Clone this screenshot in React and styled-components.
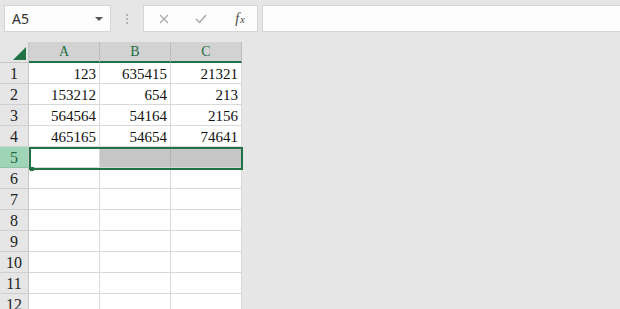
import React from 'react'
import styled, { createGlobalStyle } from 'styled-components'

const GlobalStyle = createGlobalStyle`
  * { box-sizing: border-box; }
  html, body {
    margin: 0;
    padding: 0;
    background: #e6e6e6;
    overflow: hidden;
  }
`

const Page = styled.div`
  width: 620px;
  height: 309px;
  background: #e6e6e6;
  overflow: hidden;
`

const TopBar = styled.div`
  height: 42px;
  display: flex;
  align-items: flex-start;
  padding: 5px 0 0 4px;
`

const NameBox = styled.div`
  width: 107px;
  height: 27px;
  background: #fdfdfd;
  border: 1px solid #d6d6d6;
  display: flex;
  align-items: center;
  justify-content: space-between;
  padding: 0 7px 0 7px;
  font-family: "Noto Sans", "Liberation Sans", sans-serif;
  font-size: 14px;
  color: #333;
`

const Arrow = styled.span`
  width: 0;
  height: 0;
  border-left: 4px solid transparent;
  border-right: 4px solid transparent;
  border-top: 4px solid #555;
  margin-top: 1px;
`

const Dots = styled.div`
  width: 32px;
  height: 27px;
  display: flex;
  flex-direction: column;
  align-items: center;
  justify-content: center;
  gap: 2px;
`

const Dot = styled.span`
  width: 2px;
  height: 2px;
  background: #b4b4b4;
`

const FxBox = styled.div`
  width: 115px;
  height: 27px;
  background: #fdfdfd;
  border: 1px solid #d6d6d6;
  display: flex;
  align-items: center;
  padding-left: 14px;
`

const FxButton = styled.span`
  width: ${p => p.w}px;
  display: flex;
  justify-content: center;
  align-items: baseline;
  color: ${p => p.dark ? '#444' : '#a8a8a8'};
  font-family: "Liberation Serif", serif;
  font-style: ${p => p.dark ? 'italic' : 'normal'};
  font-size: 14px;
`

const Sub = styled.span`
  font-size: 10px;
  margin-left: 1px;
`

const FormulaInput = styled.div`
  flex: 1;
  height: 27px;
  margin-left: 4px;
  background: #fdfdfd;
  border: 1px solid #d6d6d6;
  border-right: none;
`

const Sheet = styled.div`
  position: relative;
  display: grid;
  grid-template-columns: 29px 71px 71px 71px;
  grid-auto-rows: 21px;
  width: 242px;
  font-family: "Liberation Serif", "Noto Sans CJK SC", serif;
`

const Corner = styled.div`
  background: #e6e6e6;
  border-bottom: 1px solid #c6c6c6;
  border-right: 1px solid #c6c6c6;
  position: relative;
`

const ColHead = styled.div`
  background: #d2d2d2;
  border-right: 1px solid #bcbcbc;
  border-bottom: 2px solid #217346;
  display: flex;
  align-items: flex-end;
  justify-content: center;
  padding-bottom: 1px;
  font-size: 14px;
  color: #1f6e43;
`

const RowHead = styled.div`
  background: ${p => p.active ? '#9fd5b7' : '#e6e6e6'};
  color: ${p => p.active ? '#1f6b3e' : '#222'};
  border-bottom: 1px solid ${p => p.active ? '#8cc4a5' : '#d0d0d0'};
  border-right: 1px solid #c6c6c6;
  display: flex;
  align-items: center;
  justify-content: center;
  padding-top: 2px;
  font-size: 16px;
`

const Cell = styled.div`
  background: ${p => p.sel ? '#c6c6c6' : '#fff'};
  border-right: 1px solid ${p => p.sel ? '#b2b2b2' : '#d9d9d9'};
  border-bottom: 1px solid #d9d9d9;
  display: flex;
  align-items: center;
  justify-content: flex-end;
  padding: 2px 3px 0 0;
  font-size: 15px;
  color: #111;
`

const Selection = styled.div`
  position: absolute;
  left: 29px;
  top: 105px;
  width: 214px;
  height: 23px;
  border: 2px solid #217346;
  pointer-events: none;
`

const Handle = styled.span`
  position: absolute;
  left: -1px;
  bottom: -3px;
  width: 4px;
  height: 4px;
  background: #217346;
`

const data = [
  ['123', '635415', '21321'],
  ['153212', '654', '213'],
  ['564564', '54164', '2156'],
  ['465165', '54654', '74641'],
]

const CornerMark = () => (
  <svg width="29" height="21" style={{ position: 'absolute', left: 0, top: 0 }}>
    <polygon points="13,18 26,18 26,5" fill="#217346" />
  </svg>
)

const App = () => {
  const rows = Array.from({ length: 12 }, (_, i) => i + 1)
  return (
    <Page>
      <GlobalStyle />
      <TopBar>
        <NameBox>
          A5
          <Arrow />
        </NameBox>
        <Dots>
          <Dot />
          <Dot />
          <Dot />
        </Dots>
        <FxBox>
          <FxButton w={12}>
            <svg width="10" height="10" viewBox="0 0 10 10">
              <path d="M1 1 L9 9 M9 1 L1 9" stroke="#a8a8a8" strokeWidth="1.2" fill="none" />
            </svg>
          </FxButton>
          <FxButton w={62}>
            <svg width="12" height="10" viewBox="0 0 12 10">
              <path d="M1 5 L4.5 8.5 L11 1" stroke="#a8a8a8" strokeWidth="1.4" fill="none" />
            </svg>
          </FxButton>
          <FxButton w={16} dark>
            f<Sub>x</Sub>
          </FxButton>
        </FxBox>
        <FormulaInput />
      </TopBar>
      <Sheet>
        <Corner>
          <CornerMark />
        </Corner>
        <ColHead>A</ColHead>
        <ColHead>B</ColHead>
        <ColHead>C</ColHead>
        {rows.map(r => (
          <React.Fragment key={r}>
            <RowHead active={r === 5}>{r}</RowHead>
            {[0, 1, 2].map(c => (
              <Cell key={c} sel={r === 5 && c > 0}>
                {data[r - 1] ? data[r - 1][c] : ''}
              </Cell>
            ))}
          </React.Fragment>
        ))}
        <Selection>
          <Handle />
        </Selection>
      </Sheet>
    </Page>
  )
}

export default App
